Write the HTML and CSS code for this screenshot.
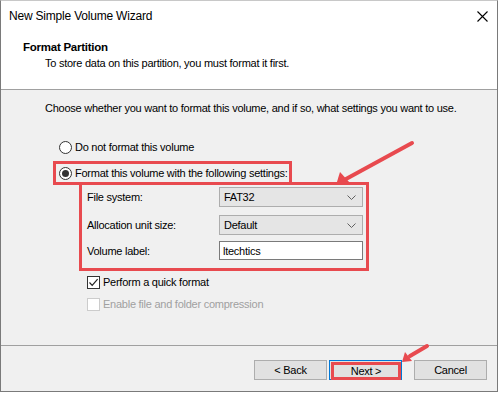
FILE: index.html
```html
<!DOCTYPE html>
<html>
<head>
<meta charset="utf-8">
<link rel="stylesheet" href="styles.css">
</head>
<body>
<div class="window">
  <div class="titlebar">
    <span class="title">New Simple Volume Wizard</span>
    <svg class="close" width="11" height="11" viewBox="0 0 11 11"><path d="M0.5 0.5 L10.5 10.5 M10.5 0.5 L0.5 10.5" stroke="#000" stroke-width="1.1" fill="none"/></svg>
  </div>
  <div class="header">
    <div class="h-title">Format Partition</div>
    <div class="h-sub">To store data on this partition, you must format it first.</div>
  </div>
  <div class="body">
    <div class="intro">Choose whether you want to format this volume, and if so, what settings you want to use.</div>
    <div class="radio-row r1"><span class="radio"></span><span class="lbl">Do not format this volume</span></div>
    <div class="radio-row r2"><span class="radio checked"></span><span class="lbl">Format this volume with the following settings:</span></div>
    <div class="settings">
      <div class="field f1"><span class="flabel">File system:</span><div class="select"><span>FAT32</span><svg class="chev" width="9" height="5" viewBox="0 0 9 5"><path d="M0.5 0.5 L4.5 4.5 L8.5 0.5" stroke="#606060" fill="none"/></svg></div></div>
      <div class="field f2"><span class="flabel">Allocation unit size:</span><div class="select"><span>Default</span><svg class="chev" width="9" height="5" viewBox="0 0 9 5"><path d="M0.5 0.5 L4.5 4.5 L8.5 0.5" stroke="#606060" fill="none"/></svg></div></div>
      <div class="field f3"><span class="flabel">Volume label:</span><div class="input">ltechtics</div></div>
    </div>
    <div class="check-row c1"><span class="checkbox"><svg width="11" height="11" viewBox="0 0 11 11"><path d="M1.5 5.5 L4.2 8.3 L9.6 2.2" stroke="#202020" stroke-width="1.2" fill="none"/></svg></span><span class="lbl">Perform a quick format</span></div>
    <div class="check-row c2 disabled"><span class="checkbox"></span><span class="lbl">Enable file and folder compression</span></div>
  </div>
  <div class="footer">
    <div class="btn back">&lt; Back</div>
    <div class="btn next"><div class="next-hl">Next &gt;</div></div>
    <div class="btn cancel">Cancel</div>
  </div>
  <svg class="arrows" width="499" height="393" viewBox="0 0 499 393">
    <path d="M412 143 L346 179" stroke="#e84a4f" stroke-width="4" stroke-linecap="round" fill="none"/>
    <path d="M336 185 L340 172 L350 183 Z" fill="#e84a4f"/>
    <path d="M427 346 L410 356" stroke="#e84a4f" stroke-width="4" stroke-linecap="round" fill="none"/>
    <path d="M402 362 L405 352 L412 361 Z" fill="#e84a4f"/>
  </svg>
</div>
</body>
</html>
```

FILE: styles.css
```css
* { box-sizing: border-box; }
html, body { margin: 0; padding: 0; background: #ffffff; }
body {
  font-family: "Liberation Sans", Arial, sans-serif;
  font-size: 11px;
  letter-spacing: -0.25px;
  color: #000;
}
.window {
  position: relative;
  width: 498px;
  height: 392px;
  border-left: 1px solid #7a7a7a;
  border-right: 1px solid #7a7a7a;
  border-bottom: 1px solid #7a7a7a;
  border-top: 1px solid #c8c8c8;
  background: #f0f0f0;
  display: flex;
  flex-direction: column;
  overflow: hidden;
}
.titlebar {
  height: 30px;
  background: #fff;
  display: flex;
  align-items: center;
  justify-content: space-between;
  padding-left: 8px;
  padding-right: 9px;
}
.title { line-height: 16px; font-size: 12px; letter-spacing: -0.2px; }
.close { display: block; margin-top: 1px; }
.header {
  height: 59px;
  background: #fff;
  border-bottom: 1px solid #a0a0a0;
  padding-top: 8px;
  line-height: 16px;
}
.h-title { font-weight: bold; font-size: 11.5px; padding-left: 22px; }
.h-sub { padding-left: 44px; }
.body {
  height: 255px;
  padding-top: 10px;
  line-height: 16px;
}
.intro { padding-left: 44px; white-space: nowrap; }
.radio-row {
  display: flex;
  align-items: center;
  gap: 3px;
  white-space: nowrap;
}
.radio {
  width: 13px;
  height: 13px;
  border: 1px solid #333;
  border-radius: 50%;
  background: #fff;
  display: flex;
  align-items: center;
  justify-content: center;
  flex: none;
}
.radio.checked::after {
  content: "";
  width: 7px;
  height: 7px;
  border-radius: 50%;
  background: #333;
}
.r1 { margin-top: 23px; margin-left: 58px; }
.r2 {
  margin-top: 6px;
  margin-left: 52px;
  width: 239px;
  height: 24px;
  border: 3px solid #e84a4f;
  padding-left: 3px;
}
.settings {
  margin-top: -3px;
  margin-left: 78px;
  width: 290px;
  height: 89px;
  border: 3px solid #e84a4f;
  padding: 2px 3px 0 5px;
}
.field { display: flex; align-items: center; white-space: nowrap; }
.f2 { margin-top: 8px; }
.f3 { margin-top: 6px; }
.flabel { width: 132px; flex: none; }
.select {
  width: 144px;
  height: 20px;
  background: #e5e5e5;
  border: 1px solid #adadad;
  display: flex;
  align-items: center;
  justify-content: space-between;
  padding: 0 6px 0 4px;
}
.chev { display: block; }
.input {
  width: 144px;
  height: 19px;
  background: #fff;
  border: 1px solid #7a7a7a;
  display: flex;
  align-items: center;
  padding-left: 3px;
}
.check-row { display: flex; align-items: center; gap: 3px; margin-left: 86px; white-space: nowrap; }
.c1 { margin-top: 3px; }
.c2 { margin-top: 6px; }
.checkbox {
  width: 13px;
  height: 13px;
  border: 1px solid #333;
  background: #fff;
  flex: none;
  display: flex;
  align-items: center;
  justify-content: center;
}
.checkbox svg { display: block; }
.disabled { color: #a0a0a0; }
.disabled .checkbox { border-color: #cccccc; }
.footer {
  flex: 1;
  border-top: 1px solid #a0a0a0;
  display: flex;
  padding-top: 14px;
  padding-left: 253px;
}
.btn {
  width: 73px;
  height: 20px;
  background: #e1e1e1;
  border: 1px solid #adadad;
  display: flex;
  align-items: center;
  justify-content: center;
  line-height: 16px;
}
.next {
  margin-left: 2px;
  border-color: #0078d7;
  padding: 0;
  align-items: stretch;
  justify-content: stretch;
}
.next-hl {
  flex: 1;
  border: 3px solid #e84a4f;
  margin: 1px 0 -1px 1px;
  display: flex;
  align-items: center;
  justify-content: center;
}
.cancel { margin-left: 12px; }
.arrows {
  position: absolute;
  left: -1px;
  top: -1px;
  pointer-events: none;
}
```
